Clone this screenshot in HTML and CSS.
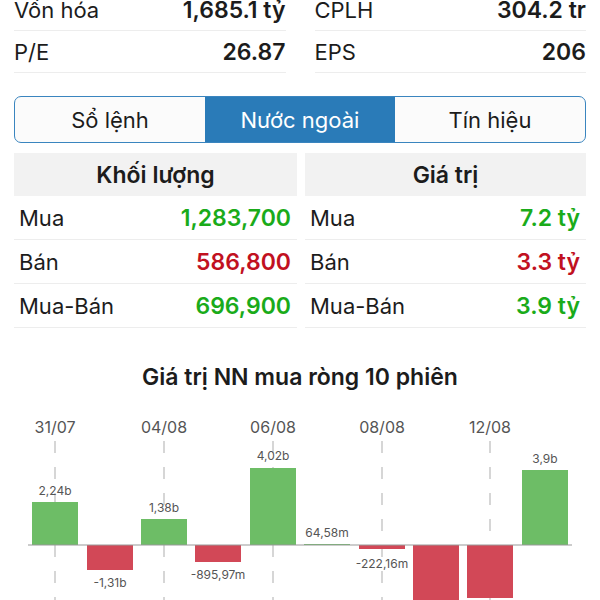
FILE: index.html
```html
<!DOCTYPE html>
<html>
	<head>
		<meta charset="utf-8">
		<title>Nước ngoài</title>
		<link rel="stylesheet" href="styles.css">
	</head>
	<body>
		<!--stats-->
		<div class="stats">
			<div class="stat"><span>Vốn hóa</span><b>1,685.1 tỷ</b></div>
			<div class="stat"><span>CPLH</span><b>304.2 tr</b></div>
			<div class="stat"><span>P/E</span><b>26.87</b></div>
			<div class="stat"><span>EPS</span><b>206</b></div>
		</div>
		<!--/stats-->
		<!--tabs-->
		<div class="tabs">
			<div class="tab">Sổ lệnh</div>
			<div class="tab active">Nước ngoài</div>
			<div class="tab">Tín hiệu</div>
		</div>
		<!--/tabs-->
		<!--foreign trade tables-->
		<div class="tables">
			<div class="table">
				<div class="head">Khối lượng</div>
				<div class="row"><span>Mua</span><b class="up">1,283,700</b></div>
				<div class="row"><span>Bán</span><b class="down">586,800</b></div>
				<div class="row"><span>Mua-Bán</span><b class="up">696,900</b></div>
			</div>
			<div class="table">
				<div class="head">Giá trị</div>
				<div class="row"><span>Mua</span><b class="up">7.2 tỷ</b></div>
				<div class="row"><span>Bán</span><b class="down">3.3 tỷ</b></div>
				<div class="row"><span>Mua-Bán</span><b class="up">3.9 tỷ</b></div>
			</div>
		</div>
		<!--/foreign trade tables-->
		<!--chart-->
		<h2 class="chart-title">Giá trị NN mua ròng 10 phiên</h2>
		<svg class="chart" width="600" height="200" viewBox="0 0 600 200">
			<g class="dates">
				<text x="55" y="32">31/07</text>
				<text x="164" y="32">04/08</text>
				<text x="273" y="32">06/08</text>
				<text x="382" y="32">08/08</text>
				<text x="490" y="32">12/08</text>
			</g>
			<g class="grid">
				<line x1="55" y1="40" x2="55" y2="200"/>
				<line x1="164" y1="40" x2="164" y2="200"/>
				<line x1="273" y1="40" x2="273" y2="200"/>
				<line x1="382" y1="40" x2="382" y2="200"/>
				<line x1="490" y1="40" x2="490" y2="200"/>
			</g>
			<g class="bars">
				<rect class="pos" x="32" y="101" width="46" height="43"/>
				<rect class="neg" x="87" y="144" width="46" height="25"/>
				<rect class="pos" x="141" y="118" width="46" height="26"/>
				<rect class="neg" x="195" y="144" width="46" height="17"/>
				<rect class="pos" x="250" y="67" width="46" height="77"/>
				<rect class="pos" x="304" y="143" width="46" height="1"/>
				<rect class="neg" x="359" y="144" width="46" height="4"/>
				<rect class="neg" x="413" y="144" width="46" height="62"/>
				<rect class="neg" x="467" y="144" width="46" height="53"/>
				<rect class="pos" x="522" y="69" width="46" height="75"/>
			</g>
			<line class="zero" x1="28" y1="144" x2="572" y2="144"/>
			<g class="values">
				<text x="55" y="94">2,24b</text>
				<text x="110" y="186">-1,31b</text>
				<text x="164" y="111">1,38b</text>
				<text x="218" y="178">-895,97m</text>
				<text x="273" y="59">4,02b</text>
				<text x="327" y="136">64,58m</text>
				<text x="382" y="167">-222,16m</text>
				<text x="545" y="62">3,9b</text>
			</g>
		</svg>
		<!--/chart-->
	</body>
</html>
```

FILE: styles.css
```css
body{
	margin:0;
	padding:0 14px;
	font-family:Inter, "Liberation Sans", sans-serif;
	color:#1c1c1c;
	background:#fff;
	overflow:hidden;
}
.stats{
	display:grid;
	grid-template-columns:1fr 1fr;
	column-gap:29px;
	margin-top:-11px;
}
.stat, .row{
	display:flex;
	justify-content:space-between;
	align-items:center;
	box-sizing:border-box;
	border-bottom:1px solid #ededed;
	font-size:22px;
}
.stat{
	height:42px;
}
.stat b, .row b{
	font-size:23px;
	font-weight:600;
}
.tabs{
	display:grid;
	grid-template-columns:repeat(3, 1fr);
	box-sizing:border-box;
	height:47px;
	margin-top:23px;
	border:1.5px solid #3a85bf;
	border-radius:7px;
	overflow:hidden;
	background:#fbfbfb;
}
.tab{
	display:flex;
	align-items:center;
	justify-content:center;
	font-size:22px;
}
.tab.active{
	background:#2a7bb8;
	color:#fff;
}
.tables{
	display:grid;
	grid-template-columns:283px 1fr;
	column-gap:8px;
	margin-top:10px;
}
.head{
	height:43px;
	display:flex;
	align-items:center;
	justify-content:center;
	background:#f2f2f2;
	font-size:23px;
	font-weight:600;
}
.row{
	height:44px;
	padding:0 6px 0 5px;
}
.up{
	color:#1aab1a;
}
.down{
	color:#c1111f;
}
.chart-title{
	margin:34px 0 0;
	line-height:30px;
	font-size:23px;
	font-weight:600;
	text-align:center;
}
.chart{
	display:block;
	margin:9px 0 0 -14px;
}
.dates text{
	font-size:16px;
	fill:#555;
	text-anchor:middle;
}
.grid line{
	stroke:#c9c9c9;
	stroke-width:1.5;
	stroke-dasharray:12 14;
}
.pos{
	fill:#6dbd66;
}
.neg{
	fill:#d24857;
}
.zero{
	stroke:#999;
	stroke-width:1;
}
.values text{
	font-size:12px;
	fill:#555;
	text-anchor:middle;
}
```
